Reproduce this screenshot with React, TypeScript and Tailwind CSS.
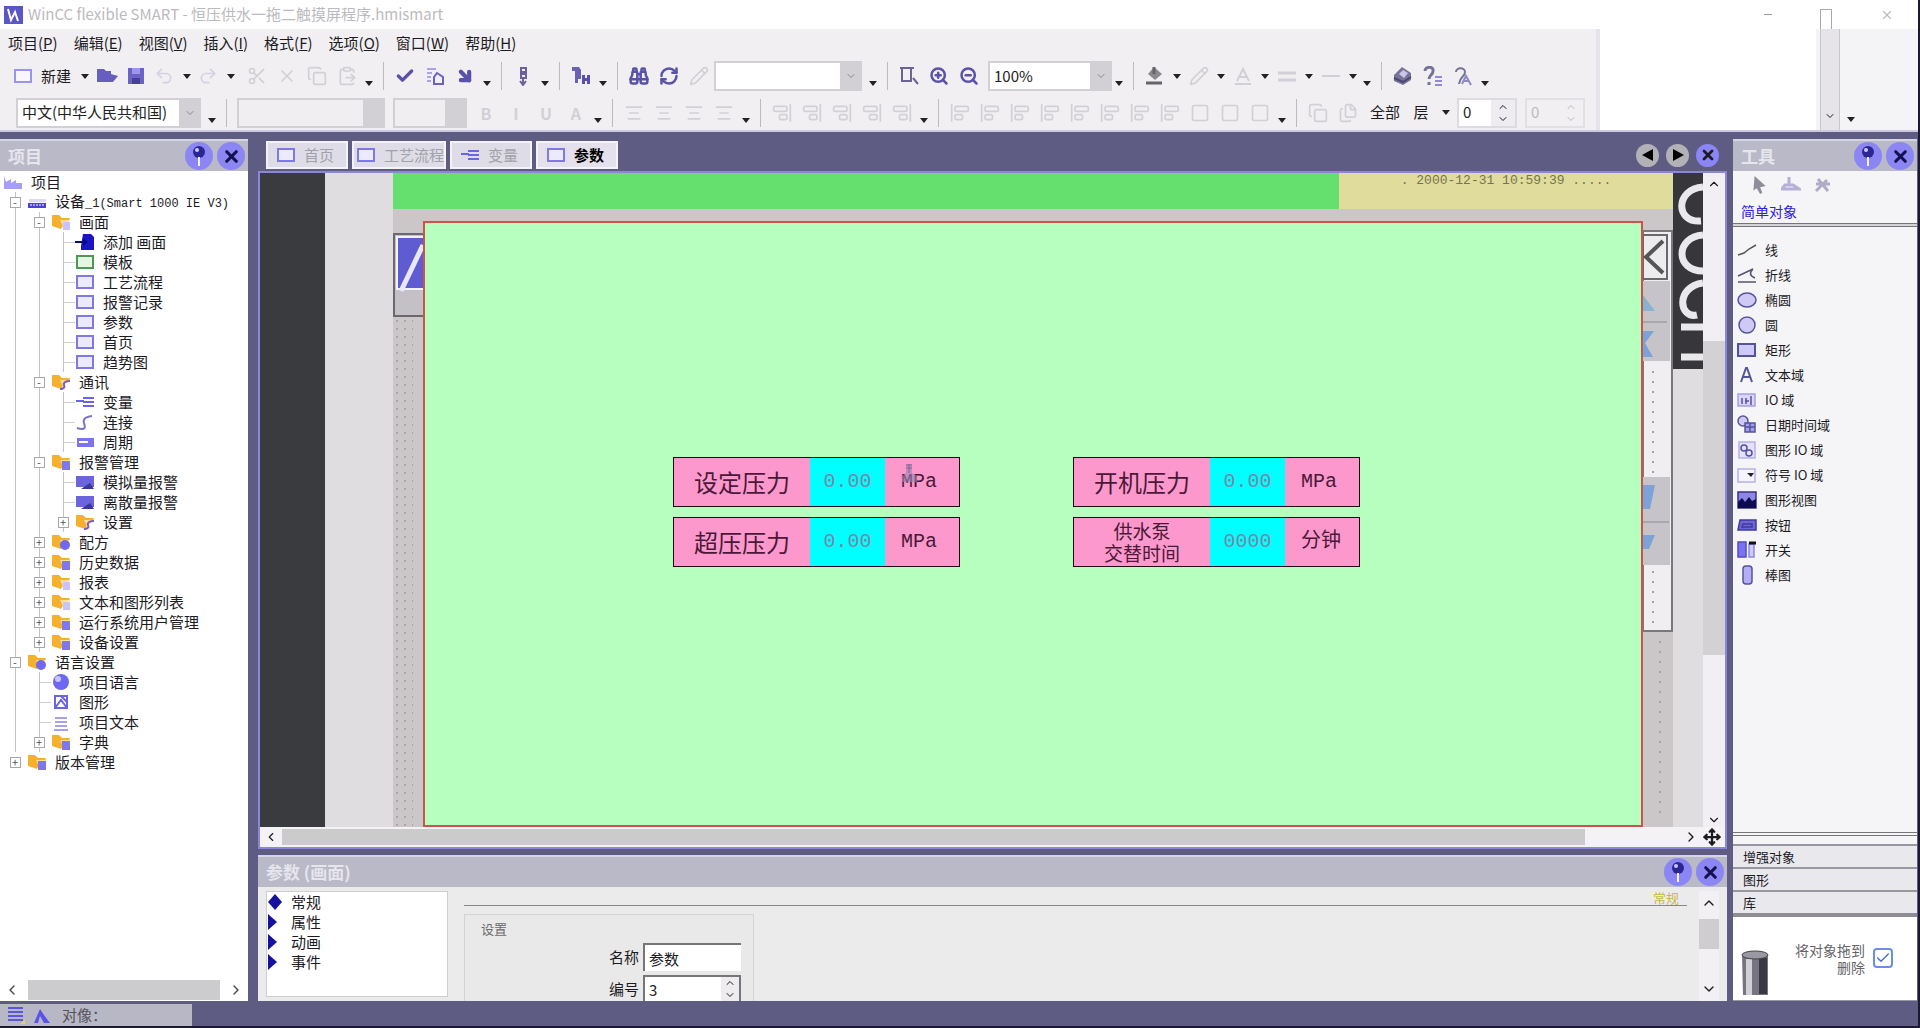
import type { ReactNode } from "react";
import clsx from "clsx";
import {
  AlignCenter,
  AlignEndVertical,
  AlignStartVertical,
  ArrowDownRight,
  Binoculars,
  Check,
  ChevronDown,
  ChevronLeft,
  ChevronRight,
  ChevronUp,
  ClipboardPaste,
  Copy,
  Files,
  Move,
  Pencil,
  Redo2,
  RefreshCw,
  Scissors,
  Square,
  Undo2,
  X,
  ZoomIn,
  ZoomOut,
} from "lucide-react";

const menus = [
  ["项目", "P"],
  ["编辑", "E"],
  ["视图", "V"],
  ["插入", "I"],
  ["格式", "F"],
  ["选项", "O"],
  ["窗口", "W"],
  ["帮助", "H"],
];

type TreeRow = { level: number; label: string; latin?: string; icon: string; mark?: "+" | "-" };

const tree: TreeRow[] = [
  { level: 0, label: "项目", icon: "project" },
  { level: 1, label: "设备", latin: "_1(Smart 1000 IE V3)", icon: "device", mark: "-" },
  { level: 2, label: "画面", icon: "folder", mark: "-" },
  { level: 3, label: "添加 画面", icon: "add" },
  { level: 3, label: "模板", icon: "template" },
  { level: 3, label: "工艺流程", icon: "screen" },
  { level: 3, label: "报警记录", icon: "screen" },
  { level: 3, label: "参数", icon: "screen" },
  { level: 3, label: "首页", icon: "screen" },
  { level: 3, label: "趋势图", icon: "screen" },
  { level: 2, label: "通讯", icon: "folder-link", mark: "-" },
  { level: 3, label: "变量", icon: "tag" },
  { level: 3, label: "连接", icon: "link" },
  { level: 3, label: "周期", icon: "cycle" },
  { level: 2, label: "报警管理", icon: "folder-box", mark: "-" },
  { level: 3, label: "模拟量报警", icon: "alarm" },
  { level: 3, label: "离散量报警", icon: "alarm" },
  { level: 3, label: "设置", icon: "folder-link", mark: "+" },
  { level: 2, label: "配方", icon: "folder-ball", mark: "+" },
  { level: 2, label: "历史数据", icon: "folder-box", mark: "+" },
  { level: 2, label: "报表", icon: "folder", mark: "+" },
  { level: 2, label: "文本和图形列表", icon: "folder", mark: "+" },
  { level: 2, label: "运行系统用户管理", icon: "folder-box", mark: "+" },
  { level: 2, label: "设备设置", icon: "folder-box", mark: "+" },
  { level: 1, label: "语言设置", icon: "folder-ball", mark: "-" },
  { level: 2, label: "项目语言", icon: "globe" },
  { level: 2, label: "图形", icon: "graphic" },
  { level: 2, label: "项目文本", icon: "text" },
  { level: 2, label: "字典", icon: "folder-box", mark: "+" },
  { level: 1, label: "版本管理", icon: "folder-box", mark: "+" },
];

const tools = [
  ["line", "线"],
  ["polyline", "折线"],
  ["ellipse", "椭圆"],
  ["circle", "圆"],
  ["rect", "矩形"],
  ["text", "文本域"],
  ["io", "IO 域"],
  ["date", "日期时间域"],
  ["gio", "图形 IO 域"],
  ["sio", "符号 IO 域"],
  ["view", "图形视图"],
  ["button", "按钮"],
  ["switch", "开关"],
  ["bar", "棒图"],
];

function TreeIcon({ kind }: { kind: string }) {
  const folder = kind.startsWith("folder");
  return (
    <svg viewBox="0 0 20 18" className="h-[18px] w-5 shrink-0">
      {folder && (
        <>
          <path d="M1 2h7l3 3h8l-1 3-4 1-4 7-9-3z" fill="#f5b02e" />
          <path d="M9 7h10l-7 6z" fill="#ffdf9a" />
        </>
      )}
      {kind === "folder" && <path d="M12 9h7v8h-7z" fill="#c9c4ff" />}
      {kind === "folder-box" && <path d="M11 8h8v9h-8z" fill="#7f78ea" />}
      {kind === "folder-ball" && <circle cx="14" cy="12" r="5" fill="#6f68f0" />}
      {kind === "folder-link" && <path d="M9 16c4 0 5-2 4-4s1-4 6-4" fill="none" stroke="#7a5cc0" strokeWidth="2" />}
      {kind === "project" && <path d="M1 16V3l2 6 5-3v4l5-3v3h6v6z" fill="#a79ff5" />}
      {kind === "device" && (
        <>
          <path d="M2 6h17v3H2z" fill="#dcd9ff" />
          <path d="M1 10h18v5H1z" fill="#4a40d8" />
          <path d="M3 12h14" stroke="#fff" strokeDasharray="2 1" />
        </>
      )}
      {kind === "add" && (
        <>
          <path d="M8 1h8l3 3v13H6v-4z" fill="#1a14c4" />
          <path d="M0 9h11M8 6l3 3-3 3" fill="none" stroke="#0b0880" strokeWidth="2" />
        </>
      )}
      {kind === "template" && <path d="M2 3h16v12H2z" fill="#e3f5e3" stroke="#4a9a55" strokeWidth="2" />}
      {kind === "screen" && <path d="M2 3h16v12H2z" fill="#eceaff" stroke="#7f78e6" strokeWidth="2" />}
      {kind === "tag" && <path d="M1 8h8M8 5h11M8 9h11M8 13h11" fill="none" stroke="#6c64e6" strokeWidth="2" />}
      {kind === "link" && <path d="M2 15c10 3 8-2 7-5s0-6 8-7" fill="none" stroke="#7a74c8" strokeWidth="2" />}
      {kind === "cycle" && (
        <>
          <path d="M2 5h17v9H2z" fill="#7b74ee" />
          <path d="M4 9h9" stroke="#fff" strokeWidth="2" />
        </>
      )}
      {kind === "alarm" && (
        <>
          <path d="M1 3h18v11H1z" fill="#6c64dc" />
          <path d="M6 16h13l-4-6z" fill="#3c3899" />
        </>
      )}
      {kind === "globe" && (
        <>
          <circle cx="10" cy="9" r="8" fill="#6d68f2" />
          <circle cx="7" cy="6" r="3" fill="#c8c6ff" />
        </>
      )}
      {kind === "graphic" && <path d="M4 3h12v12H4zM4 15l6-8 6 8M10 3l6 6" fill="none" stroke="#6c64e6" strokeWidth="2" />}
      {kind === "text" && <path d="M4 5h12M4 9h12M4 13h12M3 17h14" stroke="#8a84e4" strokeWidth="1.5" />}
    </svg>
  );
}

function ToolIcon({ kind }: { kind: string }) {
  return (
    <svg viewBox="0 0 20 20" className="h-5 w-5 shrink-0" fill="none" stroke="#57539a" strokeWidth="1.5">
      {kind === "line" && <path d="M1 15l6-2 5-4 7-4" stroke="#555" />}
      {kind === "polyline" && <path d="M1 11l15-7c-4 4-3 7 2 9M1 17h18" stroke="#555570" />}
      {kind === "ellipse" && <ellipse cx="10" cy="10" rx="9" ry="7" fill="#cfcaf5" />}
      {kind === "circle" && <circle cx="10" cy="10" r="8" fill="#cfcaf5" />}
      {kind === "rect" && <path d="M1 4h17v12H1z" fill="#cfcaf5" strokeWidth="2" />}
      {kind === "text" && <path d="M4 17l5-14h1l5 14M6 12h7" strokeWidth="2" />}
      {kind === "io" && (
        <>
          <path d="M1 4h17v12H1z" fill="#d9d5fb" stroke="#a49fe0" />
          <path d="M5 8v6M9 8v6M8 11h4M14 6v9" />
        </>
      )}
      {kind === "date" && (
        <>
          <circle cx="6" cy="6" r="5" fill="#cfcaf5" />
          <path d="M8 8h10v9H8zM8 12h10M13 8v9" fill="#a49fe8" />
        </>
      )}
      {kind === "gio" && (
        <>
          <path d="M2 2h16v16H2z" fill="#e4e1ff" stroke="#b6b1ec" />
          <circle cx="7" cy="8" r="3" />
          <circle cx="12" cy="13" r="3" />
        </>
      )}
      {kind === "sio" && (
        <>
          <path d="M1 4h17v13H1z" fill="#f6f5ff" stroke="#b6b1ec" />
          <path d="M10 8h7l-3 4z" fill="#222" stroke="none" />
        </>
      )}
      {kind === "view" && (
        <>
          <path d="M1 2h18v16H1z" fill="#8d86e6" stroke="#37347a" />
          <path d="M1 18v-6l4-4 3 4 4-5 3 4 4-2v9z" fill="#0e0b52" stroke="none" />
        </>
      )}
      {kind === "button" && <path d="M3 5h16v10H1zM6 9h9v3H5z" fill="#6d66d6" stroke="#3f3a9c" />}
      {kind === "switch" && (
        <>
          <path d="M1 2h8v15H1z" fill="#7a73ee" stroke="#534cc8" />
          <path d="M12 4h5v13h-5z" fill="#cfcaf5" stroke="#8d86e6" />
          <path d="M12 3h7" stroke="#111" strokeWidth="3" />
        </>
      )}
      {kind === "bar" && <rect x="6" y="1" width="9" height="18" rx="3" fill="#b4aef5" />}
    </svg>
  );
}

function Tool({ label, dim, children }: { label: string; dim?: boolean; children: ReactNode }) {
  return (
    <button
      aria-label={label}
      className={clsx(
        "flex h-7 w-[30px] shrink-0 items-center justify-center [&>svg]:size-5",
        dim ? "text-[#d2d0d6]" : "text-[#5a52a8]",
      )}
    >
      {children}
    </button>
  );
}

function Drop({ low, wide }: { low?: boolean; wide?: boolean }) {
  return (
    <button
      aria-label="更多"
      className={clsx("flex h-5 shrink-0 justify-center", wide ? "w-[22px]" : "w-[14px]", low ? "items-end" : "items-center")}
    >
      <svg viewBox="0 0 8 5" className="h-[5px] w-2">
        <path d="M0 0h8L4 5z" fill="#222" />
      </svg>
    </button>
  );
}

function Sep() {
  return (
    <span className="flex h-7 w-[14px] shrink-0 justify-center">
      <span className="w-px bg-[#bdbac2]" />
    </span>
  );
}

function Combo({ label, value, className, dim }: { label: string; value: string; className: string; dim?: boolean }) {
  return (
    <div className={clsx("relative h-[30px] shrink-0", className)}>
      <select
        aria-label={label}
        className={clsx(
          "h-full w-full appearance-none border-2 border-[#d2d0d4] pl-1 text-[15px] text-[#222]",
          dim ? "bg-[#f0eef0]" : "bg-white",
        )}
      >
        <option>{value}</option>
      </select>
      <span className="pointer-events-none absolute inset-y-0 right-0 flex w-[22px] items-center justify-center bg-[#d2d0d4] text-[#8b8990]">
        {!dim && <ChevronDown size={12} />}
      </span>
    </div>
  );
}

function RoundButton({ kind }: { kind: "pin" | "close" }) {
  return (
    <button
      aria-label={kind === "pin" ? "自动隐藏" : "关闭"}
      className="flex size-7 items-center justify-center rounded-full bg-[#8b86f4] text-[#14124e]"
    >
      {kind === "close" ? (
        <X size={19} strokeWidth={4} />
      ) : (
        <svg viewBox="0 0 20 22" className="h-[22px] w-5">
          <circle cx="10" cy="7" r="6" fill="#2b2792" />
          <circle cx="8" cy="5" r="2" fill="#c9c7ff" />
          <path d="M10 12v9" stroke="#f2f1ff" strokeWidth="2" />
        </svg>
      )}
    </button>
  );
}

function PanelHeader({ title }: { title: string }) {
  return (
    <div className="flex h-8 shrink-0 items-center gap-1 border-t-2 border-[#d6d5e4] bg-[#b9b9c7] pl-2 pr-[3px] text-[17px] font-bold text-[#e6e5ee]">
      <h2 className="flex-1">{title}</h2>
      <RoundButton kind="pin" />
      <RoundButton kind="close" />
    </div>
  );
}

function Toolbars() {
  return (
    <div className="min-w-0 flex-1 overflow-hidden bg-[#f1eff1]">
      <nav className="flex h-[28px] items-center gap-4 pl-2 text-[15px]">
        {menus.map(([name, key]) => (
          <button key={key} className="whitespace-nowrap">
            {name}(<u>{key}</u>)
          </button>
        ))}
      </nav>

      <div className="flex h-[38px] items-center pl-2">
        <Tool label="新建项目">
          <svg viewBox="0 0 20 20" fill="#f8f7ff" stroke="#9a94ee" strokeWidth="2">
            <path d="M2 4h16v12H2z" />
          </svg>
        </Tool>
        <button className="w-9 shrink-0 text-[15px]">新建</button>
        <Drop wide />
        <button aria-label="打开" className="w-[22px] shrink-0">
          <svg viewBox="0 0 22 18" className="w-full" fill="#675fc0">
            <path d="M1 2h7l2 2h5v3l7 2-5 6H1z" />
          </svg>
        </button>
        <button aria-label="保存" className="flex w-9 shrink-0 justify-center">
          <svg viewBox="0 0 18 18" className="size-[18px]">
            <path d="M1 1h16v16H1z" fill="#6a62c4" />
            <path d="M5 1h8v6H5z" fill="#9d97ea" />
            <path d="M5 11h8v6H5z" fill="#463f96" />
          </svg>
        </button>
        <button aria-label="撤消" className="w-[22px] shrink-0 text-[#d4d1e4]"><Undo2 size={20} /></button>
        <Drop wide />
        <button aria-label="恢复" className="w-[22px] shrink-0 text-[#d4d1e4]"><Redo2 size={20} /></button>
        <Drop wide />
        <Tool label="剪切" dim><Scissors /></Tool>
        <Tool label="删除" dim><X /></Tool>
        <Tool label="复制" dim><Copy /></Tool>
        <Tool label="粘贴" dim><ClipboardPaste /></Tool>
        <Drop low />
        <Sep />
        <Tool label="检查"><Check strokeWidth={4} /></Tool>
        <Tool label="编译">
          <svg viewBox="0 0 20 20" fill="none" stroke="#6a62c4" strokeWidth="2">
            <path d="M2 3h9M2 7h5M2 11h4M2 15h4" stroke="#a9a4e8" />
            <path d="M12 7l6 4v7H9v-7z" />
          </svg>
        </Tool>
        <Tool label="传送"><ArrowDownRight strokeWidth={5} /></Tool>
        <Drop low />
        <Sep />
        <Tool label="运行">
          <svg viewBox="0 0 20 20" fill="none" stroke="#6a62a0" strokeWidth="2">
            <path d="M8 2h5v4H8zM8 8h5v4H8zM10 12v7M7 15l3 4 3-4" />
          </svg>
        </Tool>
        <Drop low />
        <Sep />
        <Tool label="交叉引用">
          <svg viewBox="0 0 20 20" fill="#6a62b0">
            <path d="M1 1h7l2 3v9H7v4H4V5H1z" />
            <path d="M11 9h3v3h2V9h3v9h-3v-3h-2v3h-3z" fill="#5a52a8" />
          </svg>
        </Tool>
        <Drop low />
        <Sep />
        <Tool label="查找"><Binoculars strokeWidth={3} /></Tool>
        <Tool label="替换"><RefreshCw strokeWidth={3} /></Tool>
        <Tool label="查找下一个" dim><Pencil /></Tool>
        <Combo label="查找内容" value="" className="w-[148px]" />
        <span className="w-1 shrink-0" />
        <Drop low />
        <Sep />
        <Tool label="缩放区域">
          <svg viewBox="0 0 20 20" fill="none" stroke="#6a6494" strokeWidth="2">
            <path d="M1 2h14M3 2v13h9V2M14 12l5 6" />
          </svg>
        </Tool>
        <Tool label="放大"><ZoomIn strokeWidth={3} /></Tool>
        <Tool label="缩小"><ZoomOut strokeWidth={3} /></Tool>
        <Combo label="缩放" value="100%" className="ml-1 w-[124px]" />
        <Drop low />
        <Sep />
        <button aria-label="填充颜色" className="flex w-[30px] shrink-0 justify-center">
          <svg viewBox="0 0 20 20" className="size-5">
            <path d="M9 1l8 7-7 6-7-6z" fill="#8b898e" />
            <path d="M9 1v7M1 17h16" stroke="#66646a" strokeWidth="3" />
          </svg>
        </button>
        <Drop />
        <Tool label="线条颜色" dim><Pencil /></Tool>
        <Drop />
        <Tool label="字体颜色" dim>
          <svg viewBox="0 0 20 20" fill="none" stroke="currentColor" strokeWidth="2">
            <path d="M4 15l6-12 6 12M6 11h8M2 18h16" />
          </svg>
        </Tool>
        <Drop />
        <Tool label="线宽" dim>
          <svg viewBox="0 0 20 20" stroke="currentColor" strokeWidth="3">
            <path d="M1 7h18M1 14h18" />
          </svg>
        </Tool>
        <Drop />
        <Tool label="线型" dim>
          <svg viewBox="0 0 20 20" stroke="currentColor" strokeWidth="2">
            <path d="M1 10h18" />
          </svg>
        </Tool>
        <Drop />
        <Drop low />
        <Sep />
        <Tool label="帮助主题">
          <svg viewBox="0 0 20 20">
            <path d="M1 9L9 1l9 6v7l-8 5-9-4z" fill="#77749a" />
            <path d="M6 8l4-4 5 3-4 5z" fill="#c9c6e8" />
            <path d="M1 12l9 4 8-5" fill="none" stroke="#4c4970" strokeWidth="2" />
          </svg>
        </Tool>
        <Tool label="帮助">
          <svg viewBox="0 0 20 20" fill="none" stroke="#77729c" strokeWidth="3">
            <path d="M2 5c0-5 9-5 8 0 0 4-4 4-4 8M6 16v3" />
            <path d="M12 11h7M12 15h7M12 19h7" stroke="#8f89d8" strokeWidth="2" />
          </svg>
        </Tool>
        <Tool label="支持">
          <svg viewBox="0 0 20 20" fill="none" stroke="#77729c" strokeWidth="2">
            <path d="M3 6c0-5 9-5 9 0s-5 4-6 12" />
            <path d="M9 18l4-8 5 9M10 15h6" stroke="#8f89c8" />
          </svg>
        </Tool>
        <Drop low />
      </div>

      <div className="flex h-[35px] items-center pl-4">
        <Combo label="编辑语言" value="中文(中华人民共和国)" className="w-[185px]" />
        <span className="w-1 shrink-0" />
        <Drop low />
        <Sep />
        <Combo label="字体" value="" dim className="mx-1 w-[148px]" />
        <Combo label="字号" value="" dim className="mx-1 w-[74px]" />
        {["B", "I", "U", "A"].map((c) => (
          <Tool key={c} label={c} dim>
            <span className="font-bold">{c}</span>
          </Tool>
        ))}
        <Drop low />
        <Sep />
        {["左对齐", "居中", "右对齐", "底对齐"].map((name) => (
          <Tool key={name} label={name} dim>
            <AlignCenter />
          </Tool>
        ))}
        <Drop low />
        <Sep />
        {["旋转", "水平翻转", "垂直翻转", "前移", "后移"].map((name) => (
          <Tool key={name} label={name} dim>
            <AlignEndVertical />
          </Tool>
        ))}
        <Drop low />
        <Sep />
        {["左", "中", "右", "上", "居", "下", "等宽", "等高"].map((name) => (
          <Tool key={name} label={name} dim>
            <AlignStartVertical />
          </Tool>
        ))}
        {["同宽", "同高", "同大小"].map((name) => (
          <Tool key={name} label={name} dim>
            <Square />
          </Tool>
        ))}
        <Drop low />
        <Sep />
        <Tool label="组合" dim><Copy /></Tool>
        <Tool label="取消组合" dim><Files /></Tool>
        <span className="ml-1 w-9 shrink-0 text-center text-[15px]">全部</span>
        <span className="w-9 shrink-0 text-center text-[15px]">层</span>
        <Drop />
        <div className="ml-1 flex h-[30px] w-[60px] shrink-0 border-2 border-[#dddbe0] bg-white">
          <input aria-label="层" defaultValue="0" className="w-8 pl-1 text-[15px] outline-none" />
          <span className="flex flex-1 flex-col items-center justify-center bg-[#eeecf0]">
            <ChevronUp size={12} />
            <ChevronDown size={12} />
          </span>
        </div>
        <div className="ml-2 flex h-[30px] w-[60px] shrink-0 border-2 border-[#e2e0e4] text-[#bbb9c0]">
          <input aria-label="可见层" disabled defaultValue="0" className="w-8 pl-1 text-[15px]" />
          <span className="flex flex-1 flex-col items-center justify-center">
            <ChevronUp size={12} />
            <ChevronDown size={12} />
          </span>
        </div>
      </div>
    </div>
  );
}

function ProjectPanel() {
  return (
    <aside className="flex w-[248px] shrink-0 flex-col bg-white">
      <PanelHeader title="项目" />
      <ul className="flex-1 pl-[3px] pt-px text-[15px] leading-5">
        {tree.map((row, i) => (
          <li key={row.label} className="flex h-5 items-center whitespace-nowrap">
            {Array.from({ length: row.level }, (_, k) => {
              const last = k === row.level - 1;
              const open = i < tree.length - 1;
              return (
                <span key={k} className="relative flex h-5 w-6 items-center justify-center">
                  {open && <span className="absolute inset-y-0 left-3 w-px bg-[#c4c2c8]" />}
                  {last && !row.mark && <span className="absolute left-3 h-px w-3 bg-[#cfcdd4]" />}
                  {last && row.mark && (
                    <button
                      aria-label={row.mark === "+" ? "展开" : "折叠"}
                      className="relative flex size-[11px] items-center justify-center border border-[#a9a7ae] bg-white text-[11px] leading-none text-[#555]"
                    >
                      {row.mark}
                    </button>
                  )}
                </span>
              );
            })}
            <span className="w-7 shrink-0">
              <TreeIcon kind={row.icon} />
            </span>
            <span>
              {row.label}
              {row.latin && <span className="font-['Liberation_Mono'] text-[12px]">{row.latin}</span>}
            </span>
          </li>
        ))}
      </ul>
      <div className="flex h-[22px] items-center justify-between px-1 text-[#444]">
        <ChevronLeft size={16} />
        <div className="h-5 w-48 bg-[#cccbcd]" />
        <ChevronRight size={16} />
      </div>
    </aside>
  );
}

function Tab({ label, active, tag, className }: { label: string; active?: boolean; tag?: boolean; className: string }) {
  return (
    <button
      className={clsx(
        "flex h-7 items-center gap-2 border-2 border-[#f4f3fb] text-[15px]",
        active ? "bg-[#e4e1ec] font-bold text-black" : "bg-[#dedce6] text-[#a3a1ab]",
        className,
      )}
    >
      <TreeIcon kind={tag ? "tag" : "screen"} />
      {label}
    </button>
  );
}

function Field({ label, value, unit }: { label: ReactNode; value: string; unit: string }) {
  return (
    <label className="flex h-[50px] border border-[#1c0c14] bg-[#fd98cc] text-2xl text-[#4a1838]">
      <span className="flex w-[136px] items-center justify-center text-center">{label}</span>
      <input
        defaultValue={value}
        className="w-[75px] bg-[#00ffff] text-center font-['Liberation_Mono'] text-xl text-[#7a86a8] outline-none"
      />
      <span className="flex flex-1 items-center pl-4 font-['Liberation_Mono','Noto_Sans_CJK_SC'] text-xl">{unit}</span>
    </label>
  );
}

function Editor() {
  return (
    <section className="flex flex-1 flex-col">
      <div className="flex h-8 items-center gap-1 pl-2">
        <Tab label="首页" className="w-[82px] pl-2" />
        <Tab label="工艺流程" className="w-[94px] whitespace-nowrap pl-0.5" />
        <Tab label="变量" tag className="w-[82px] pl-2" />
        <Tab label="参数" active className="w-[82px] pl-2" />
        <div className="ml-auto flex items-center gap-[7px] pr-2">
          <button aria-label="上一个" className="flex size-[23px] items-center justify-center rounded-full bg-[#b3b1b8]">
            <svg viewBox="0 0 12 12" className="size-3"><path d="M11 0v12L0 6z" /></svg>
          </button>
          <button aria-label="下一个" className="flex size-[23px] items-center justify-center rounded-full bg-[#b3b1b8]">
            <svg viewBox="0 0 12 12" className="size-3"><path d="M1 0v12l11-6z" /></svg>
          </button>
          <button aria-label="关闭" className="flex size-[23px] items-center justify-center rounded-full bg-[#8b86f4]">
            <X size={16} strokeWidth={4} />
          </button>
        </div>
      </div>

      <div className="flex flex-1 flex-col border-2 border-[#8b86d8] bg-[#f4f2f5]">
        <div className="flex flex-1">
          <div className="w-[65px] bg-[#3a3b3f]" />
          <div className="w-[68px] bg-[#dfdde0]" />
          <div className="flex flex-1 flex-col bg-[#cbc6c8]">
            <div className="flex h-9">
              <div className="flex-1 bg-[#65e06f]" />
              <div className="w-[334px] bg-[#e0dc9c] text-center font-['Liberation_Mono'] text-[13px] leading-4 text-[#77744e]">
                . 2000-12-31 10:59:39 .....
              </div>
            </div>
            <div className="flex flex-1 pt-3">
              <div className="flex w-[30px] flex-col pt-3">
                <svg viewBox="0 0 30 84" className="h-[84px] w-[30px]">
                  <path d="M0 0h30v84H0z" fill="#6b696e" />
                  <path d="M2 2h28v80H2z" fill="#c3c1c6" />
                  <path d="M3 3h27v54H3z" fill="#f2f1fa" />
                  <path d="M5 5h25v50H5z" fill="#5f5bd0" />
                  <path d="M8 58L30 12" stroke="#e9e8fb" strokeWidth="5" />
                </svg>
                <div className="w-5 flex-1 bg-[radial-gradient(#aaa7ac_1px,transparent_1px)] bg-[length:8px_8px]" />
              </div>
              <div className="relative flex-1 border-2 border-[#d0504c] bg-[#b6ffbe] pl-[248px] pt-[234px]">
                <div className="grid grid-cols-[287px_287px] gap-x-[113px] gap-y-[10px]">
                  <Field label="设定压力" value="0.00" unit="MPa" />
                  <Field label="开机压力" value="0.00" unit="MPa" />
                  <Field label="超压压力" value="0.00" unit="MPa" />
                  <Field
                    label={
                      <span className="text-[19px] leading-[22px]">
                        供水泵
                        <br />
                        交替时间
                      </span>
                    }
                    value="0000"
                    unit="分钟"
                  />
                </div>
                {/* touch cursor */}
                <svg viewBox="0 0 20 20" className="absolute left-[474px] top-[240px] size-5 opacity-60">
                  <path d="M7 1h6v9l5 3v6H3v-6l4-3z" fill="#9a86b4" />
                  <path d="M7 2h6M7 5h6M10 1v9" stroke="#4a3c66" />
                </svg>
              </div>
              <div className="w-[30px]">
                <svg viewBox="0 0 30 600" className="h-[600px] w-[30px]">
                  <path d="M0 10h29v400H0z" fill="#f0eef0" stroke="#7a787c" strokeWidth="2" />
                  <path d="M0 14h24v44H0z" fill="#ececee" stroke="#6a686c" strokeWidth="2" />
                  <path d="M20 20L3 36l17 16" fill="none" stroke="#555" strokeWidth="4" />
                  <path d="M0 60h27v80H0zM0 256h27v88H0z" fill="#c6c4c8" />
                  <path d="M0 101h24M0 301h26" stroke="#8e8c92" />
                  <path d="M0 74l12 16H0z" fill="#86b4d0" />
                  <path d="M11 110L2 122l8 14H0v-26zM0 264h12l-5 24H0zM0 314h12l-6 14H0z" fill="#7ba3d8" />
                  <path d="M10 150v104M10 350v56M17 420v180" stroke="#a5a3a8" strokeDasharray="2 8" strokeWidth="2" />
                </svg>
              </div>
            </div>
          </div>
          <div className="w-[30px] bg-[#dfdde0]">
            <svg viewBox="0 0 30 196" className="h-[196px] w-[30px]">
              <path d="M0 0h30v196H0z" fill="#37373b" />
              <g fill="none" stroke="#e9e8ea" strokeWidth="7">
                <path d="M30 14C2 16 2 50 28 48" />
                <path d="M30 62C2 64 2 98 30 98" />
                <path d="M30 110C2 114 6 146 24 142" />
                <path d="M8 154h22M8 184h22" />
              </g>
            </svg>
          </div>
          <div className="flex w-[22px] flex-col items-center bg-[#f1eff3] pt-1">
            <ChevronUp size={14} />
            <div className="mt-[150px] h-[314px] w-full bg-[#d3d1d4]" />
            <ChevronDown size={14} className="mt-auto" />
          </div>
        </div>
        <div className="flex h-5 items-center gap-1 px-1">
          <ChevronLeft size={14} />
          <div className="h-4 flex-1 bg-[#cccbcc]" />
          <ChevronRight size={16} className="ml-[94px]" />
          <Move size={18} strokeWidth={3} />
        </div>
      </div>
    </section>
  );
}

function Properties() {
  return (
    <section className="flex h-[146px] shrink-0 flex-col bg-[#ecebec]">
      <PanelHeader title="参数 (画面)" />
      <div className="flex min-h-0 flex-1 overflow-hidden pt-1">
        <ul className="ml-2 mb-1 w-[182px] border border-[#d0ced2] bg-white text-[15px] leading-5">
          {["常规", "属性", "动画", "事件"].map((name, i) => (
            <li key={name} className="flex h-5 items-center gap-2">
              <svg viewBox="0 0 16 16" className="size-4" fill="#1410a0">
                {i === 0 ? <path d="M8 0l7 8-7 8-7-8z" /> : <path d="M1 0l9 8-9 8z" />}
              </svg>
              {name}
            </li>
          ))}
        </ul>
        <div className="ml-4 flex-1 pt-[14px]">
          <div className="relative border-t border-[#8a888c]">
            <span className="absolute -top-4 right-2 text-[13px] leading-4 text-[#c9b83a]">常规</span>
          </div>
          <fieldset className="mt-2 h-28 w-[290px] border border-[#d4d2d5] bg-[#eae9ea] px-2">
            <p className="h-7 pl-2 text-[13px] leading-7 text-[#6b696e]">设置</p>
            <div className="grid grid-cols-[166px_98px] items-center gap-x-1 gap-y-1 text-[15px]">
              <label htmlFor="name" className="text-right">名称</label>
              <input id="name" defaultValue="参数" className="h-7 border-l-2 border-t-2 border-[#77757a] bg-white pl-1" />
              <label htmlFor="num" className="text-right">编号</label>
              <div className="flex h-7 border-l-2 border-t-2 border-[#77757a] bg-white">
                <input id="num" defaultValue="3" className="w-[76px] pl-1" />
                <span className="flex flex-1 flex-col items-center border-r-2 border-[#77757a] bg-[#eeecef]">
                  <ChevronUp size={12} />
                  <ChevronDown size={12} />
                </span>
              </div>
            </div>
          </fieldset>
        </div>
        <div className="ml-3 mr-2 flex w-5 flex-col items-center bg-[#f2f0f2] py-1">
          <ChevronUp size={16} />
          <div className="mt-2 h-[30px] w-full bg-[#cfcdd0]" />
          <ChevronDown size={16} className="mt-auto" />
        </div>
      </div>
    </section>
  );
}

function Toolbox() {
  return (
    <aside className="flex w-[184px] shrink-0 flex-col bg-[#f5f4f6] text-[13px]">
      <PanelHeader title="工具" />
      <div className="flex h-7 items-center gap-3 pl-4 text-[#b3afc8]">
        <svg viewBox="0 0 18 18" className="size-5"><path d="M5 1l10 9-5 1 2 5-2 1-3-5-3 2z" fill="#8f8d99" /></svg>
        <svg viewBox="0 0 20 20" className="size-5" fill="none" stroke="#b5b0d8" strokeWidth="3"><path d="M8 2v8M4 10h8l6 4H1z" /></svg>
        <svg viewBox="0 0 20 20" className="size-5" fill="none" stroke="#b0abc6" strokeWidth="3"><path d="M3 16l11-11M5 4l10 12M3 9h14" /></svg>
      </div>
      <button className="h-6 pl-2 text-left text-[14px] text-[#2a22e0]">简单对象</button>
      <div className="h-1 border-y border-[#77757a] bg-[#d5d3d8]" />
      <ul className="flex-1 pl-1 pt-[10px]">
        {tools.map(([icon, name]) => (
          <li key={icon}>
            <button className="flex h-[25px] items-center gap-2">
              <ToolIcon kind={icon} />
              {name}
            </button>
          </li>
        ))}
      </ul>
      <div className="mb-2 h-1 border-y border-[#77757a]" />
      {["增强对象", "图形", "库"].map((name) => (
        <button key={name} className="h-[23px] border-t-2 border-[#9896a0] bg-[#e9e8ec] pl-[10px] text-left">
          {name}
        </button>
      ))}
      <div className="h-1 bg-[#8f8d93]" />
      <div className="flex h-[84px] items-end border-b border-[#9896a0] bg-white pb-1 pl-2">
        <svg viewBox="0 0 28 46" className="h-[46px] w-7">
          <path d="M1 5h26v40H2z" fill="#77757f" />
          <path d="M5 9h6v36H5z" fill="#d2d0d6" />
          <path d="M18 8h8v36h-8z" fill="#3a3745" />
          <ellipse cx="14" cy="5" rx="13" ry="4" fill="#9a98a2" stroke="#444" />
        </svg>
        <p className="mb-5 ml-auto w-[74px] text-right text-[14px] leading-[17px] text-[#66646a]">将对象拖到删除</p>
        <button aria-label="删除" className="mb-7 ml-2 mr-6 rounded border-2 border-[#6a8ee8] text-[#3b6de0]">
          <Check size={16} />
        </button>
      </div>
    </aside>
  );
}

export default function App() {
  return (
    <div className="flex h-screen flex-col overflow-hidden border-b-2 border-r-2 border-[#1b1930] bg-[#5e5c82] font-['Noto_Sans_CJK_SC',sans-serif] text-[#1c1b1f]">
      <header className="shrink-0 border-b-2 border-[#cdc8e6] bg-white">
        <div className="flex h-[29px] items-center">
          <svg viewBox="0 0 22 22" className="h-[22px] w-6">
            <path d="M3 2h19v18H3z" fill="#5b56c8" />
            <path d="M7 5l3 11 4-8 3 9" fill="none" stroke="#fff" strokeWidth="2" />
          </svg>
          <h1 className="ml-1 text-[15px] text-[#bcbac0]">WinCC flexible SMART - 恒压供水一拖二触摸屏程序.hmismart</h1>
          <button aria-label="最小化" className="ml-auto mr-12 h-px w-2 bg-[#999]" />
          <button aria-label="最大化" className="h-5 w-3 self-end border border-b-0 border-[#aaa]" />
          <button aria-label="关闭窗口" className="ml-12 mr-6 text-[#bbb]"><X size={14} /></button>
        </div>
        <div className="flex">
          <Toolbars />
          <div className="w-[220px] shrink-0 border-l-4 border-[#e6e4ea]" />
          <div className="flex w-[102px] shrink-0 items-end gap-1 bg-[#f4f3f5] pl-1">
            <div className="flex h-full w-5 items-end justify-center border-x border-[#c9c7cd] bg-[#e6e4e8] pb-2">
              <ChevronDown size={12} />
            </div>
            <span className="mb-2">
              <Drop low />
            </span>
          </div>
        </div>
      </header>

      <div className="flex min-h-0 flex-1 pr-px pt-[7px]">
        <ProjectPanel />
        <main className="ml-[10px] mr-[6px] flex min-w-0 flex-1 flex-col gap-[6px]">
          <Editor />
          <Properties />
        </main>
        <Toolbox />
      </div>

      <footer className="mt-[3px] flex h-[22px] shrink-0">
        <div className="flex w-48 items-center gap-2 bg-[#b8b7c6] pl-2 text-[15px] text-[#55535c]">
          <svg viewBox="0 0 46 20" className="h-5 w-[46px]">
            <path d="M0 3h15M0 7h15M0 11h15M0 15h15" stroke="#5b53e8" strokeWidth="2" />
            <path d="M13 19l4-5v5z" fill="#e6d84a" />
            <path d="M26 18l6-14 4 6 6 8h-6l-4-7-2 7z" fill="#5b53e8" />
          </svg>
          对像：
        </div>
      </footer>
    </div>
  );
}
